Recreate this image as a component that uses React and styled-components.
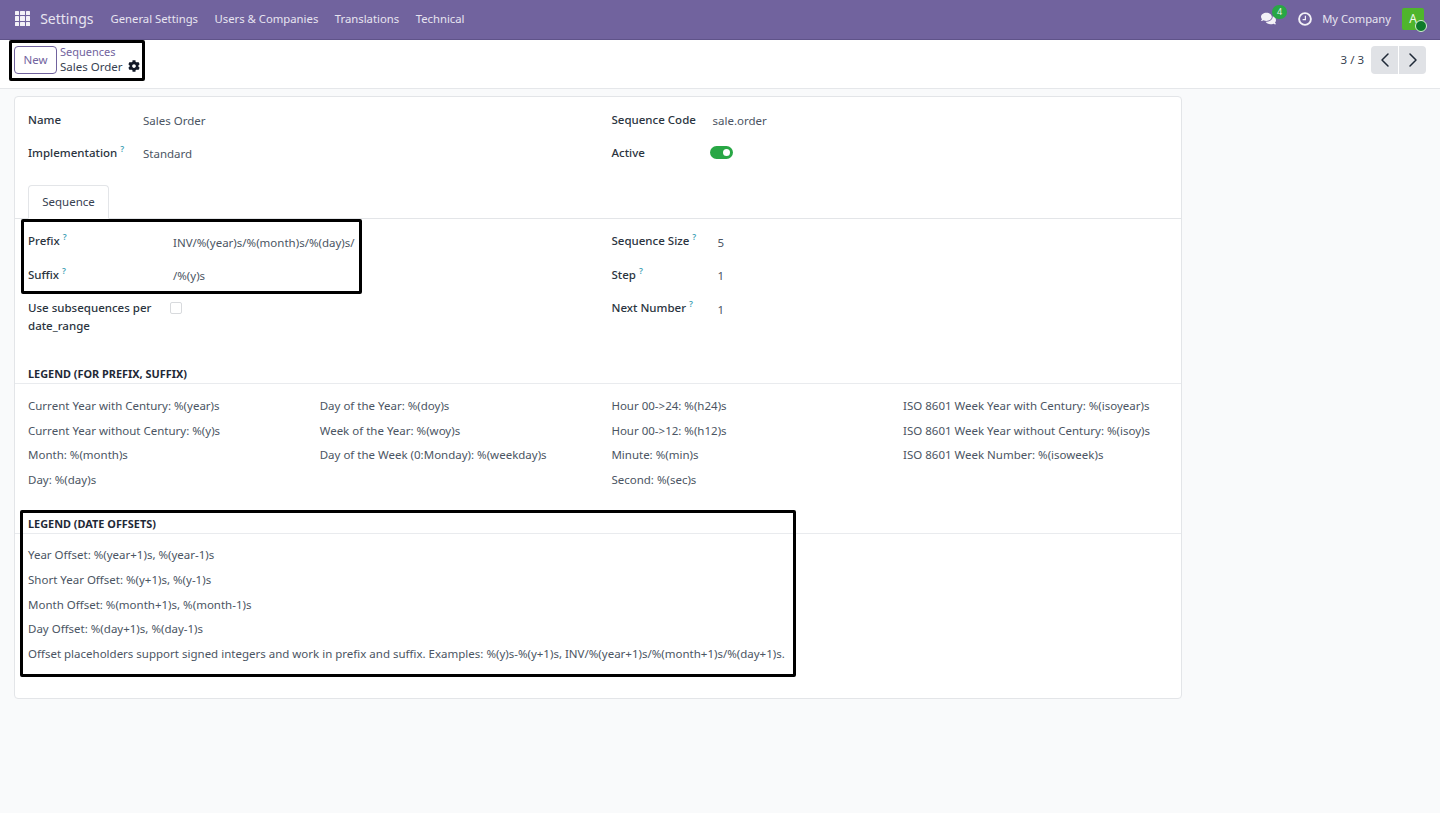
import React from 'react'
import styled, { createGlobalStyle } from 'styled-components'
import { ChevronLeft, ChevronRight } from 'lucide-react'
import { FaCog, FaComments } from 'react-icons/fa'

const GlobalStyle = createGlobalStyle`
  html, body {
    margin: 0;
    padding: 0;
    background: #f9fafb;
  }
  body {
    font-family: 'Noto Sans', 'Open Sans', sans-serif;
    font-size: 11.5px;
    color: #374151;
  }
  * {
    box-sizing: border-box;
  }
`

const Page = styled.div`
  position: relative;
  width: 1440px;
  height: 813px;
  overflow: hidden;
`

const Navbar = styled.header`
  display: flex;
  align-items: center;
  height: 40px;
  padding: 0 16px 2px 15px;
  background: #71639e;
  border-bottom: 1px solid #5f5389;
  color: #e7e4f0;
`

const AppsIcon = styled.div`
  display: grid;
  grid-template-columns: repeat(3, 4.4px);
  grid-auto-rows: 4.2px;
  gap: 1px;
  margin-right: 10px;

  span {
    background: #f3f1f7;
    border-radius: 0.5px;
  }
`

const Brand = styled.div`
  font-size: 14px;
  margin-right: 17px;
`

const NavItem = styled.div`
  font-size: 11.3px;
  margin-right: 16.5px;
`

const NavRight = styled.div`
  margin-left: auto;
  display: flex;
  align-items: center;
`

const Messages = styled.div`
  position: relative;
  display: flex;
  margin-right: 22px;
  font-size: 15px;
  color: #f3f1f7;
`

const Count = styled.span`
  position: absolute;
  top: -6px;
  left: 11px;
  width: 15px;
  height: 14px;
  border-radius: 7px;
  background: #28a745;
  color: #e9f6ec;
  font-size: 9px;
  line-height: 14px;
  text-align: center;
`

const Clock = styled.svg`
  width: 14px;
  height: 14px;
  margin-right: 10px;
  color: #f3f1f7;
`

const Company = styled.div`
  font-size: 11.2px;
  margin-right: 11px;
`

const Avatar = styled.div`
  position: relative;
  width: 22px;
  height: 22px;
  border-radius: 2px;
  background: #4fb52c;
  color: #f1f8ec;
  font-size: 12px;
  line-height: 22px;
  text-align: center;

  &::after {
    content: '';
    position: absolute;
    right: -3px;
    bottom: -2px;
    width: 10px;
    height: 10px;
    border-radius: 50%;
    background: #0e7a2a;
    border: 1px solid #d6efd6;
  }
`

const ControlPanel = styled.div`
  display: flex;
  align-items: center;
  height: 49px;
  padding: 0 14px 9px;
  background: #fff;
  border-bottom: 1px solid #e5e7ea;
`

const NewButton = styled.button`
  width: 43px;
  height: 28px;
  margin-right: 3px;
  padding: 0;
  border: 1px solid #71639e;
  border-radius: 4px;
  background: #fff;
  color: #71639e;
  font: inherit;
  font-size: 11.5px;
`

const Breadcrumb = styled.div`
  display: flex;
  flex-direction: column;
  margin-bottom: 2px;
  font-size: 11.5px;
  line-height: 15px;
`

const Parent = styled.span`
  color: #71639e;
  font-size: 11px;
`

const Current = styled.span`
  display: flex;
  align-items: center;
  gap: 5px;
  color: #374151;
  svg {
    color: #111827;
    font-size: 12px;
  }
`

const Pager = styled.div`
  margin-left: auto;
  display: flex;
  align-items: center;
  gap: 7px;
`

const PagerButtons = styled.div`
  display: flex;
  gap: 1px;
`

const PagerButton = styled.div`
  display: flex;
  align-items: center;
  justify-content: center;
  width: 27px;
  height: 28px;
  background: #e0e2e6;
  color: #1f2937;
  border-radius: ${props => (props.$left ? '4px 0 0 4px' : '0 4px 4px 0')};
`

const Sheet = styled.main`
  width: 1168px;
  height: 603px;
  margin: 7px 0 0 14px;
  padding-top: 4.5px;
  background: #fff;
  border: 1px solid #e3e5e8;
  border-radius: 4px;
`

const Columns = styled.div`
  display: grid;
  grid-template-columns: 583.5px 1fr;
  padding-left: 13px;
`

const Field = styled.div`
  display: flex;
  height: ${props => props.$h || 33.5}px;
`

const Label = styled.div`
  width: ${props => props.$w || 115}px;
  padding-top: ${props => props.$top ?? 9}px;
  font-weight: 500;
  line-height: ${props => props.$lh || 17}px;
  color: #2b3440;
  flex-shrink: 0;
`

const Help = styled.sup`
  margin-left: 3px;
  font-size: 8.5px;
  font-weight: 600;
  line-height: 0;
  color: #3f9fb5;
`

const Value = styled.div`
  padding-top: ${props => props.$top ?? 10.5}px;
  line-height: 17px;
  color: #4b5563;
  white-space: nowrap;
`

const Toggle = styled.div`
  position: relative;
  width: 23px;
  height: 13px;
  margin-top: 11.5px;
  margin-left: -3px;
  border-radius: 7px;
  background: #28a745;

  &::after {
    content: '';
    position: absolute;
    top: 3px;
    right: 3px;
    width: 7px;
    height: 7px;
    border-radius: 50%;
    background: #fff;
  }
`

const Tabs = styled.div`
  display: flex;
  margin-top: 17.5px;
  padding-left: 13px;
  height: 34px;
  border-bottom: 1px solid #e3e5e8;
`

const Tab = styled.div`
  width: 81px;
  height: 34px;
  border: 1px solid #e3e5e8;
  border-bottom-color: #fff;
  border-radius: 4px 4px 0 0;
  text-align: center;
  line-height: 32px;
  color: #374151;
`

const TabBody = styled.div`
  padding-top: 4px;
`

const Checkbox = styled.div`
  width: 12px;
  height: 12px;
  margin: 12px 0 0 12px;
  border: 1px solid #d8dadd;
  border-radius: 2px;
  background: #fff;
`

const LegendTitle = styled.h3`
  margin: ${props => props.$mt}px 0 0;
  padding: 0 0 2px 13px;
  font-size: 10.9px;
  line-height: 15px;
  font-weight: 700;
  color: #1f2937;
  border-bottom: 1px solid #e9ebee;
`

const LegendGrid = styled.div`
  display: grid;
  grid-template-columns: 291.7px 291.7px 291.7px 1fr;
  padding: 10px 0 0 13px;
`

const LegendColumn = styled.div`
  display: flex;
  flex-direction: column;
`

const LegendLine = styled.div`
  height: 24.6px;
  line-height: 24.6px;
  color: #4b5563;
  white-space: nowrap;
`

const OffsetList = styled.div`
  padding: 9.5px 0 0 13px;
`

const Mark = styled.div`
  position: absolute;
  left: ${props => props.$x}px;
  top: ${props => props.$y}px;
  width: ${props => props.$w}px;
  height: ${props => props.$h}px;
  border: 3px solid #000;
  border-radius: 2px;
  pointer-events: none;
`

const legend = [
  [
    'Current Year with Century: %(year)s',
    'Current Year without Century: %(y)s',
    'Month: %(month)s',
    'Day: %(day)s'
  ],
  [
    'Day of the Year: %(doy)s',
    'Week of the Year: %(woy)s',
    'Day of the Week (0:Monday): %(weekday)s'
  ],
  [
    'Hour 00->24: %(h24)s',
    'Hour 00->12: %(h12)s',
    'Minute: %(min)s',
    'Second: %(sec)s'
  ],
  [
    'ISO 8601 Week Year with Century: %(isoyear)s',
    'ISO 8601 Week Year without Century: %(isoy)s',
    'ISO 8601 Week Number: %(isoweek)s'
  ]
]

const offsets = [
  'Year Offset: %(year+1)s, %(year-1)s',
  'Short Year Offset: %(y+1)s, %(y-1)s',
  'Month Offset: %(month+1)s, %(month-1)s',
  'Day Offset: %(day+1)s, %(day-1)s',
  'Offset placeholders support signed integers and work in prefix and suffix. Examples: %(y)s-%(y+1)s, INV/%(year+1)s/%(month+1)s/%(day+1)s.'
]

export default function App() {
  return (
    <Page>
      <GlobalStyle />
      <Navbar>
        <AppsIcon>
          {Array.from({ length: 9 }).map((_, i) => (
            <span key={i} />
          ))}
        </AppsIcon>
        <Brand>Settings</Brand>
        <NavItem>General Settings</NavItem>
        <NavItem>Users &amp; Companies</NavItem>
        <NavItem>Translations</NavItem>
        <NavItem>Technical</NavItem>
        <NavRight>
          <Messages>
            <FaComments />
            <Count>4</Count>
          </Messages>
          <Clock viewBox='0 0 14 14' fill='none' stroke='currentColor'>
            <circle cx='7' cy='7' r='5.9' strokeWidth='1.9' />
            <path d='M7.4 3.8V7.6H4.6' strokeWidth='1.2' />
          </Clock>
          <Company>My Company</Company>
          <Avatar>A</Avatar>
        </NavRight>
      </Navbar>

      <ControlPanel>
        <NewButton>New</NewButton>
        <Breadcrumb>
          <Parent>Sequences</Parent>
          <Current>
            Sales Order <FaCog />
          </Current>
        </Breadcrumb>
        <Pager>
          <span>3 / 3</span>
          <PagerButtons>
            <PagerButton $left>
              <ChevronLeft size={24} strokeWidth={1.5} />
            </PagerButton>
            <PagerButton>
              <ChevronRight size={24} strokeWidth={1.5} />
            </PagerButton>
          </PagerButtons>
        </Pager>
      </ControlPanel>

      <Sheet>
        <Columns>
          <div>
            <Field $h={33}>
              <Label>Name</Label>
              <Value>Sales Order</Value>
            </Field>
            <Field $h={33}>
              <Label>
                Implementation<Help>?</Help>
              </Label>
              <Value>Standard</Value>
            </Field>
          </div>
          <div>
            <Field $h={33}>
              <Label $w={101}>Sequence Code</Label>
              <Value>sale.order</Value>
            </Field>
            <Field $h={33}>
              <Label $w={101}>Active</Label>
              <Toggle />
            </Field>
          </div>
        </Columns>

        <Tabs>
          <Tab>Sequence</Tab>
        </Tabs>

        <TabBody>
          <Columns>
            <div>
              <Field>
                <Label $w={145}>
                  Prefix<Help>?</Help>
                </Label>
                <Value>INV/%(year)s/%(month)s/%(day)s/</Value>
              </Field>
              <Field>
                <Label $w={145}>
                  Suffix<Help>?</Help>
                </Label>
                <Value>/%(y)s</Value>
              </Field>
              <Field $h={42}>
                <Label $w={130} $lh={18}>
                  Use subsequences per date_range
                </Label>
                <Checkbox />
              </Field>
            </div>
            <div>
              <Field>
                <Label $w={106}>
                  Sequence Size<Help>?</Help>
                </Label>
                <Value>5</Value>
              </Field>
              <Field>
                <Label $w={106}>
                  Step<Help>?</Help>
                </Label>
                <Value>1</Value>
              </Field>
              <Field>
                <Label $w={106}>
                  Next Number<Help>?</Help>
                </Label>
                <Value>1</Value>
              </Field>
            </div>
          </Columns>
        </TabBody>

        <LegendTitle $mt={34}>LEGEND (FOR PREFIX, SUFFIX)</LegendTitle>
        <LegendGrid>
          {legend.map((col, i) => (
            <LegendColumn key={i}>
              {col.map(line => (
                <LegendLine key={line}>{line}</LegendLine>
              ))}
            </LegendColumn>
          ))}
        </LegendGrid>

        <LegendTitle $mt={23.6}>LEGEND (DATE OFFSETS)</LegendTitle>
        <OffsetList>
          {offsets.map(line => (
            <LegendLine key={line}>{line}</LegendLine>
          ))}
        </OffsetList>
      </Sheet>

      <Mark $x={9} $y={40} $w={136} $h={41} />
      <Mark $x={21} $y={219} $w={341} $h={75} />
      <Mark $x={20} $y={510} $w={776} $h={167} />
    </Page>
  )
}
